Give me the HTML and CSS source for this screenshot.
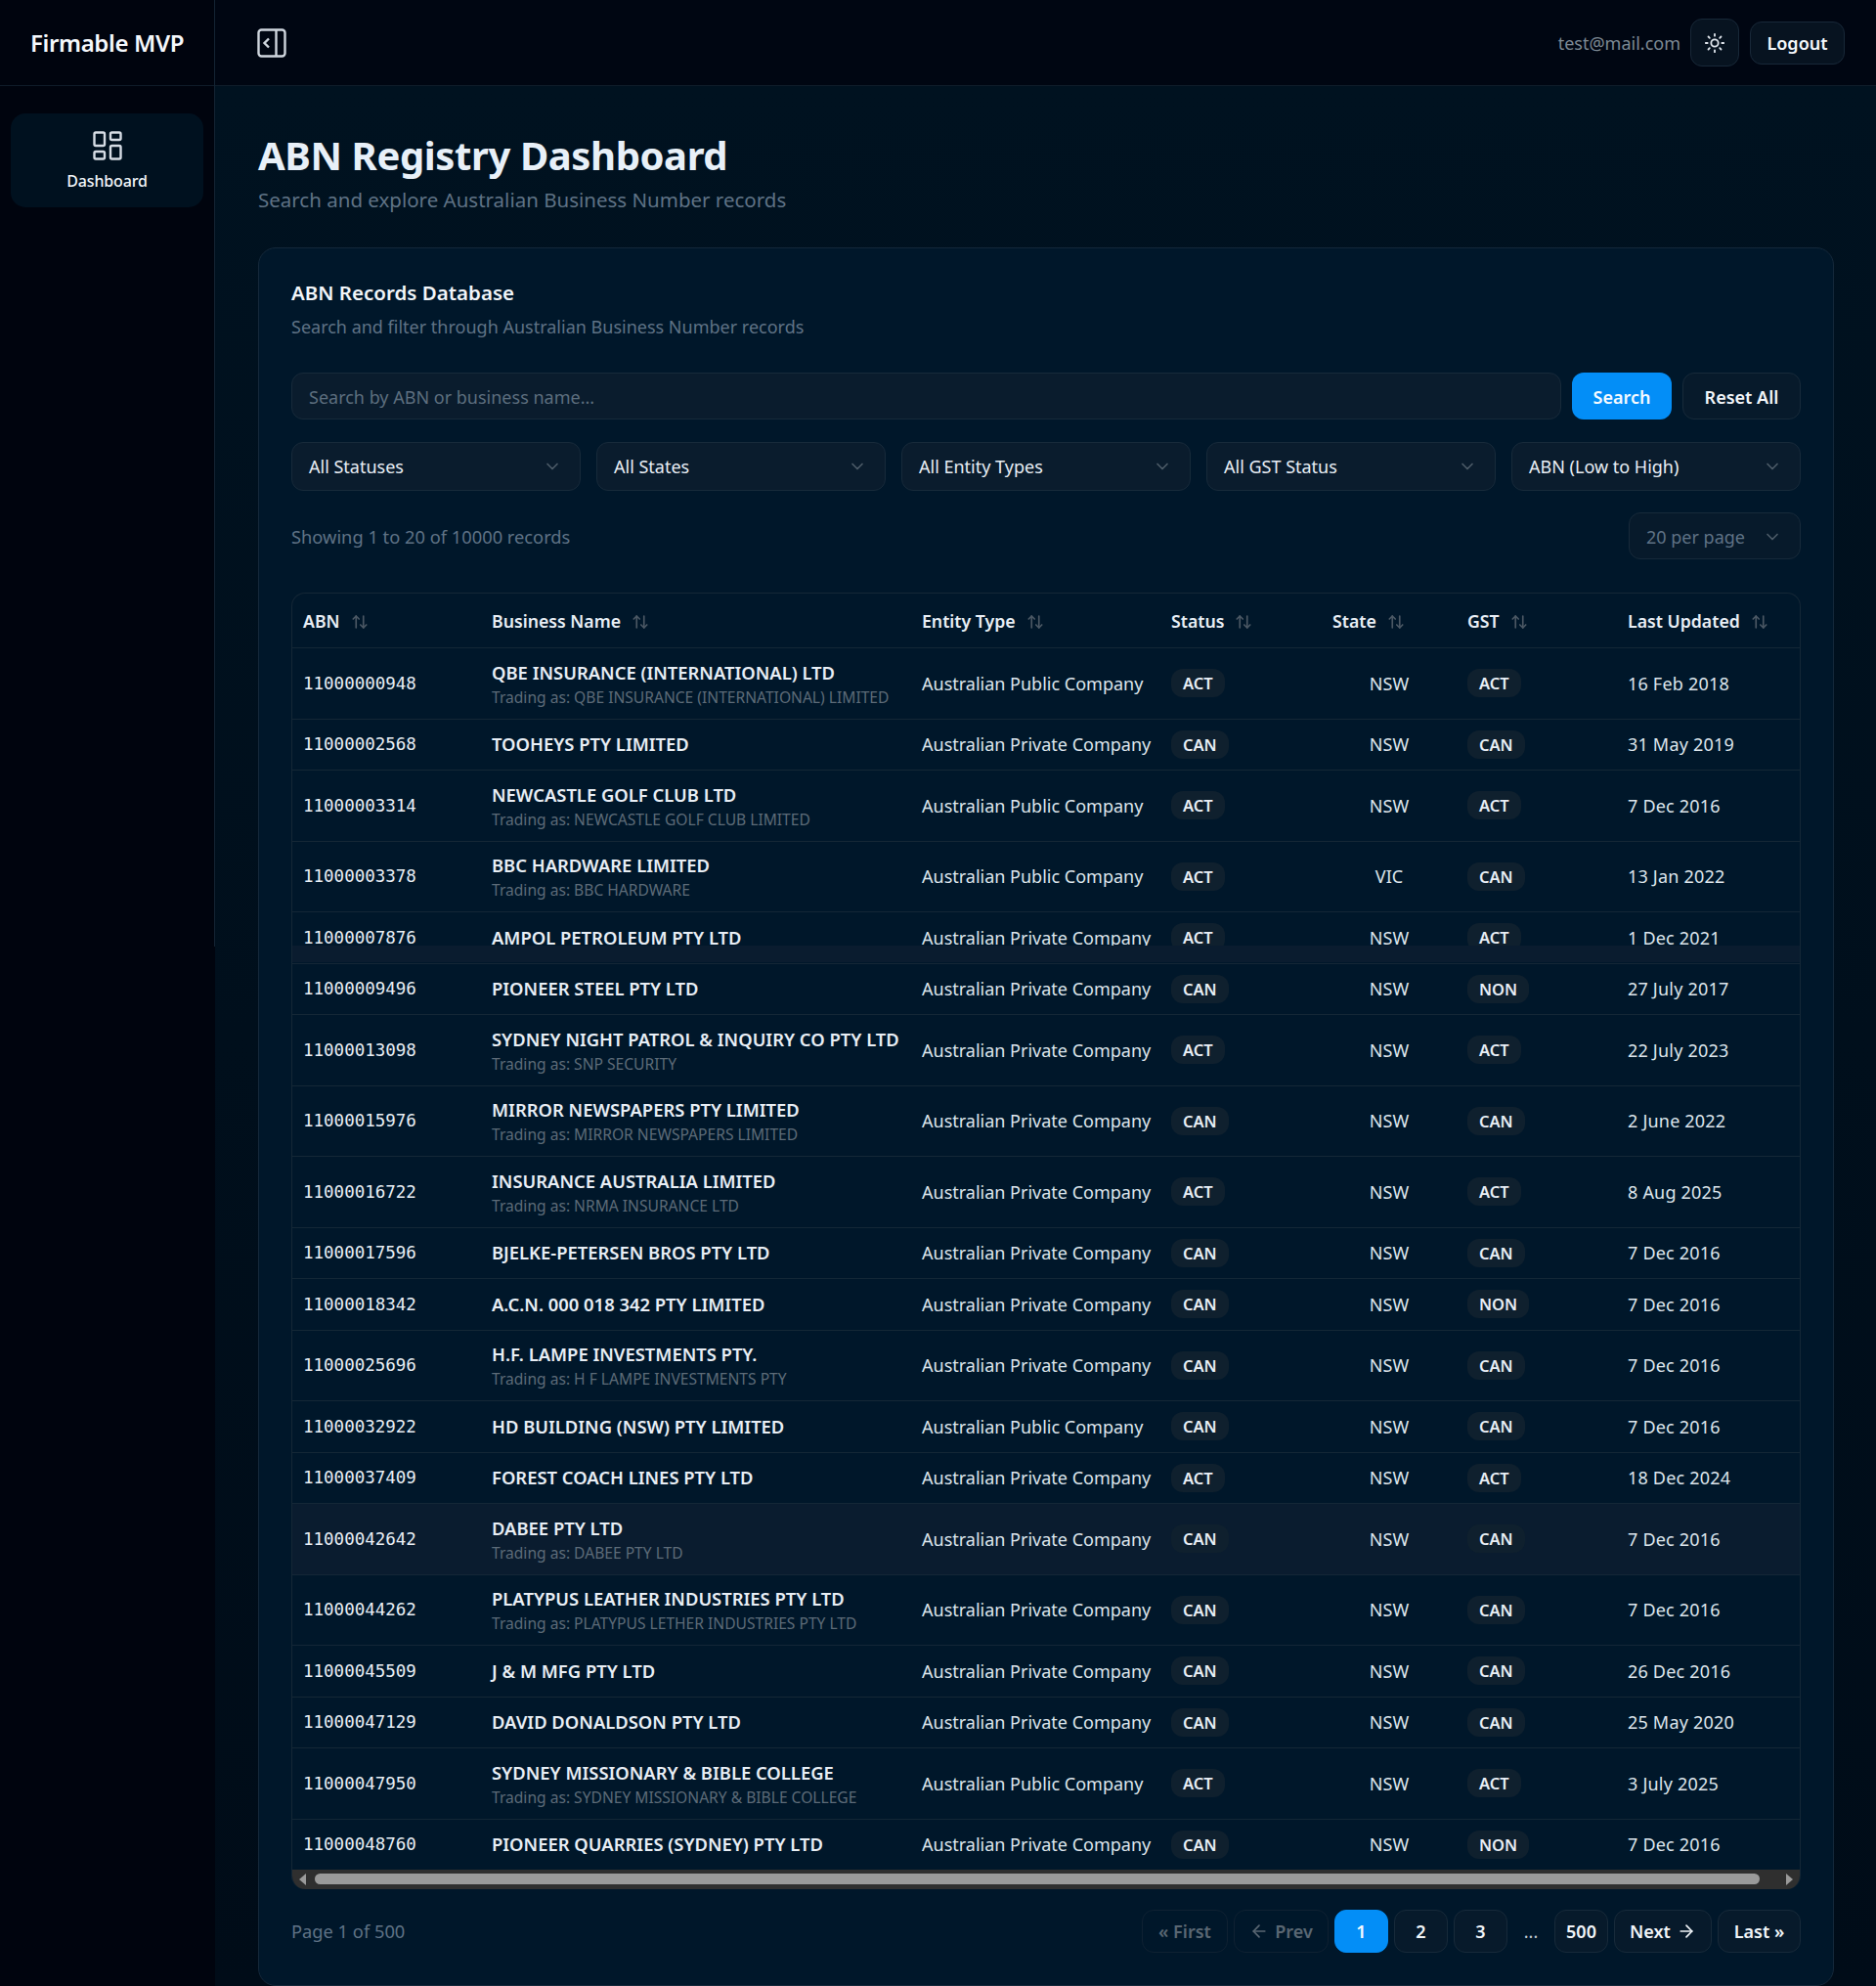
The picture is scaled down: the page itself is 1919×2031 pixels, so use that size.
FILE: index.html
```html
<!DOCTYPE html>
<html>
<head>
    <title>Firmable MVP</title>
    <link rel="stylesheet" href="styles.css">
</head>
<body>
    <svg class="icon-defs" width="0" height="0">
        <symbol id="i-sort" viewBox="0 0 24 24"><path d="m21 16-4 4-4-4"/><path d="M17 20V4"/><path d="m3 8 4-4 4 4"/><path d="M7 4v16"/></symbol>
        <symbol id="i-chev" viewBox="0 0 24 24"><path d="m6 9 6 6 6-6"/></symbol>
    </svg>

    <!-- sidebar -->
    <aside class="sidebar">
        <div class="sidebar-inner">
            <div class="brand">Firmable MVP</div>
            <nav class="side-nav">
                <a class="nav-item">
                    <svg class="nav-icon" viewBox="0 0 24 24"><rect width="7" height="9" x="3" y="3" rx="1"/><rect width="7" height="5" x="14" y="3" rx="1"/><rect width="7" height="9" x="14" y="12" rx="1"/><rect width="7" height="5" x="3" y="16" rx="1"/></svg>
                    <span>Dashboard</span>
                </a>
            </nav>
        </div>
    </aside>

    <div class="content">
        <!-- top bar -->
        <header class="topbar">
            <svg class="panel-icon" viewBox="0 0 24 24"><rect width="18" height="18" x="3" y="3" rx="2"/><path d="M15 3v18"/><path d="m10 15-3-3 3-3"/></svg>
            <div class="topbar-right">
                <span class="user-mail">test@mail.com</span>
                <button class="theme-btn">
                    <svg class="sun-icon" viewBox="0 0 24 24"><circle cx="12" cy="12" r="4"/><path d="M12 2v2"/><path d="M12 20v2"/><path d="m4.93 4.93 1.41 1.41"/><path d="m17.66 17.66 1.41 1.41"/><path d="M2 12h2"/><path d="M20 12h2"/><path d="m6.34 17.66-1.41 1.41"/><path d="m19.07 4.93-1.41 1.41"/></svg>
                </button>
                <button class="logout-btn">Logout</button>
            </div>
        </header>

        <main class="main">
            <h1>ABN Registry Dashboard</h1>
            <p class="page-sub">Search and explore Australian Business Number records</p>

            <section class="card">
                <h2>ABN Records Database</h2>
                <p class="card-sub">Search and filter through Australian Business Number records</p>

                <div class="search-row">
                    <input class="search-input" type="text" placeholder="Search by ABN or business name...">
                    <button class="btn-primary">Search</button>
                    <button class="btn-outline">Reset All</button>
                </div>

                <div class="filter-row">
                    <button class="select-box"><span>All Statuses</span><svg class="chev"><use href="#i-chev"/></svg></button>
                    <button class="select-box"><span>All States</span><svg class="chev"><use href="#i-chev"/></svg></button>
                    <button class="select-box"><span>All Entity Types</span><svg class="chev"><use href="#i-chev"/></svg></button>
                    <button class="select-box"><span>All GST Status</span><svg class="chev"><use href="#i-chev"/></svg></button>
                    <button class="select-box"><span>ABN (Low to High)</span><svg class="chev"><use href="#i-chev"/></svg></button>
                </div>

                <div class="count-row">
                    <span class="muted">Showing 1 to 20 of 10000 records</span>
                    <button class="select-box per-page"><span>20 per page</span><svg class="chev"><use href="#i-chev"/></svg></button>
                </div>

                <div class="table-wrap">
                    <table class="abn-table">
                        <colgroup>
                            <col class="c-abn"><col class="c-name"><col class="c-type"><col class="c-status"><col class="c-state"><col class="c-gst"><col class="c-date">
                        </colgroup>
                        <thead>
                            <tr>
                                <th>ABN<svg class="sort"><use href="#i-sort"/></svg></th>
                                <th>Business Name<svg class="sort"><use href="#i-sort"/></svg></th>
                                <th>Entity Type<svg class="sort"><use href="#i-sort"/></svg></th>
                                <th>Status<svg class="sort"><use href="#i-sort"/></svg></th>
                                <th>State<svg class="sort"><use href="#i-sort"/></svg></th>
                                <th>GST<svg class="sort"><use href="#i-sort"/></svg></th>
                                <th>Last Updated<svg class="sort"><use href="#i-sort"/></svg></th>
                            </tr>
                        </thead>
                        <tbody>
                            <tr class="two">
                                <td class="abn">11000000948</td>
                                <td><div class="biz">QBE INSURANCE (INTERNATIONAL) LTD</div><div class="trading">Trading as: QBE INSURANCE (INTERNATIONAL) LIMITED</div></td>
                                <td>Australian Public Company</td><td><span class="badge">ACT</span></td><td class="state">NSW</td><td><span class="badge">ACT</span></td><td>16 Feb 2018</td>
                            </tr>
                            <tr>
                                <td class="abn">11000002568</td>
                                <td><div class="biz">TOOHEYS PTY LIMITED</div></td>
                                <td>Australian Private Company</td><td><span class="badge">CAN</span></td><td class="state">NSW</td><td><span class="badge">CAN</span></td><td>31 May 2019</td>
                            </tr>
                            <tr class="two">
                                <td class="abn">11000003314</td>
                                <td><div class="biz">NEWCASTLE GOLF CLUB LTD</div><div class="trading">Trading as: NEWCASTLE GOLF CLUB LIMITED</div></td>
                                <td>Australian Public Company</td><td><span class="badge">ACT</span></td><td class="state">NSW</td><td><span class="badge">ACT</span></td><td>7 Dec 2016</td>
                            </tr>
                            <tr class="two">
                                <td class="abn">11000003378</td>
                                <td><div class="biz">BBC HARDWARE LIMITED</div><div class="trading">Trading as: BBC HARDWARE</div></td>
                                <td>Australian Public Company</td><td><span class="badge">ACT</span></td><td class="state">VIC</td><td><span class="badge">CAN</span></td><td>13 Jan 2022</td>
                            </tr>
                            <tr class="cut-row">
                                <td class="abn">11000007876</td>
                                <td><div class="biz">AMPOL PETROLEUM PTY LTD</div></td>
                                <td>Australian Private Company</td><td><span class="badge">ACT</span></td><td class="state">NSW</td><td><span class="badge">ACT</span></td><td>1 Dec 2021</td>
                            </tr>
                            <tr>
                                <td class="abn">11000009496</td>
                                <td><div class="biz">PIONEER STEEL PTY LTD</div></td>
                                <td>Australian Private Company</td><td><span class="badge">CAN</span></td><td class="state">NSW</td><td><span class="badge">NON</span></td><td>27 July 2017</td>
                            </tr>
                            <tr class="two">
                                <td class="abn">11000013098</td>
                                <td><div class="biz">SYDNEY NIGHT PATROL &amp; INQUIRY CO PTY LTD</div><div class="trading">Trading as: SNP SECURITY</div></td>
                                <td>Australian Private Company</td><td><span class="badge">ACT</span></td><td class="state">NSW</td><td><span class="badge">ACT</span></td><td>22 July 2023</td>
                            </tr>
                            <tr class="two">
                                <td class="abn">11000015976</td>
                                <td><div class="biz">MIRROR NEWSPAPERS PTY LIMITED</div><div class="trading">Trading as: MIRROR NEWSPAPERS LIMITED</div></td>
                                <td>Australian Private Company</td><td><span class="badge">CAN</span></td><td class="state">NSW</td><td><span class="badge">CAN</span></td><td>2 June 2022</td>
                            </tr>
                            <tr class="two">
                                <td class="abn">11000016722</td>
                                <td><div class="biz">INSURANCE AUSTRALIA LIMITED</div><div class="trading">Trading as: NRMA INSURANCE LTD</div></td>
                                <td>Australian Private Company</td><td><span class="badge">ACT</span></td><td class="state">NSW</td><td><span class="badge">ACT</span></td><td>8 Aug 2025</td>
                            </tr>
                            <tr>
                                <td class="abn">11000017596</td>
                                <td><div class="biz">BJELKE-PETERSEN BROS PTY LTD</div></td>
                                <td>Australian Private Company</td><td><span class="badge">CAN</span></td><td class="state">NSW</td><td><span class="badge">CAN</span></td><td>7 Dec 2016</td>
                            </tr>
                            <tr>
                                <td class="abn">11000018342</td>
                                <td><div class="biz">A.C.N. 000 018 342 PTY LIMITED</div></td>
                                <td>Australian Private Company</td><td><span class="badge">CAN</span></td><td class="state">NSW</td><td><span class="badge">NON</span></td><td>7 Dec 2016</td>
                            </tr>
                            <tr class="two">
                                <td class="abn">11000025696</td>
                                <td><div class="biz">H.F. LAMPE INVESTMENTS PTY.</div><div class="trading">Trading as: H F LAMPE INVESTMENTS PTY</div></td>
                                <td>Australian Private Company</td><td><span class="badge">CAN</span></td><td class="state">NSW</td><td><span class="badge">CAN</span></td><td>7 Dec 2016</td>
                            </tr>
                            <tr>
                                <td class="abn">11000032922</td>
                                <td><div class="biz">HD BUILDING (NSW) PTY LIMITED</div></td>
                                <td>Australian Public Company</td><td><span class="badge">CAN</span></td><td class="state">NSW</td><td><span class="badge">CAN</span></td><td>7 Dec 2016</td>
                            </tr>
                            <tr>
                                <td class="abn">11000037409</td>
                                <td><div class="biz">FOREST COACH LINES PTY LTD</div></td>
                                <td>Australian Private Company</td><td><span class="badge">ACT</span></td><td class="state">NSW</td><td><span class="badge">ACT</span></td><td>18 Dec 2024</td>
                            </tr>
                            <tr class="two hovered">
                                <td class="abn">11000042642</td>
                                <td><div class="biz">DABEE PTY LTD</div><div class="trading">Trading as: DABEE PTY LTD</div></td>
                                <td>Australian Private Company</td><td><span class="badge">CAN</span></td><td class="state">NSW</td><td><span class="badge">CAN</span></td><td>7 Dec 2016</td>
                            </tr>
                            <tr class="two">
                                <td class="abn">11000044262</td>
                                <td><div class="biz">PLATYPUS LEATHER INDUSTRIES PTY LTD</div><div class="trading">Trading as: PLATYPUS LETHER INDUSTRIES PTY LTD</div></td>
                                <td>Australian Private Company</td><td><span class="badge">CAN</span></td><td class="state">NSW</td><td><span class="badge">CAN</span></td><td>7 Dec 2016</td>
                            </tr>
                            <tr>
                                <td class="abn">11000045509</td>
                                <td><div class="biz">J &amp; M MFG PTY LTD</div></td>
                                <td>Australian Private Company</td><td><span class="badge">CAN</span></td><td class="state">NSW</td><td><span class="badge">CAN</span></td><td>26 Dec 2016</td>
                            </tr>
                            <tr>
                                <td class="abn">11000047129</td>
                                <td><div class="biz">DAVID DONALDSON PTY LTD</div></td>
                                <td>Australian Private Company</td><td><span class="badge">CAN</span></td><td class="state">NSW</td><td><span class="badge">CAN</span></td><td>25 May 2020</td>
                            </tr>
                            <tr class="two">
                                <td class="abn">11000047950</td>
                                <td><div class="biz">SYDNEY MISSIONARY &amp; BIBLE COLLEGE</div><div class="trading">Trading as: SYDNEY MISSIONARY &amp; BIBLE COLLEGE</div></td>
                                <td>Australian Public Company</td><td><span class="badge">ACT</span></td><td class="state">NSW</td><td><span class="badge">ACT</span></td><td>3 July 2025</td>
                            </tr>
                            <tr class="last">
                                <td class="abn">11000048760</td>
                                <td><div class="biz">PIONEER QUARRIES (SYDNEY) PTY LTD</div></td>
                                <td>Australian Private Company</td><td><span class="badge">CAN</span></td><td class="state">NSW</td><td><span class="badge">NON</span></td><td>7 Dec 2016</td>
                            </tr>
                        </tbody>
                    </table>
                    <div class="cut-band"></div>
                    <div class="scrollbar">
                        <span class="arrow-left"></span>
                        <span class="thumb"></span>
                        <span class="arrow-right"></span>
                    </div>
                </div>

                <div class="pager-row">
                    <span class="muted">Page 1 of 500</span>
                    <div class="pager">
                        <button class="page-btn disabled first">« First</button>
                        <button class="page-btn disabled prev"><svg class="page-arrow" viewBox="0 0 24 24"><path d="m12 19-7-7 7-7"/><path d="M19 12H5"/></svg>Prev</button>
                        <button class="page-btn num active">1</button>
                        <button class="page-btn num">2</button>
                        <button class="page-btn num">3</button>
                        <span class="dots">...</span>
                        <button class="page-btn num">500</button>
                        <button class="page-btn next">Next<svg class="page-arrow" viewBox="0 0 24 24"><path d="M5 12h14"/><path d="m12 5 7 7-7 7"/></svg></button>
                        <button class="page-btn last-btn">Last »</button>
                    </div>
                </div>
            </section>
        </main>
    </div>
</body>
</html>
```

FILE: styles.css
```css
* {
    box-sizing: border-box;
}

html, body {
    margin: 0;
    height: 2031px;
    overflow: hidden;
}

body {
    display: flex;
    background: #00040e;
    color: #e8eef5;
    font-family: "Noto Sans", "Open Sans", sans-serif;
    font-size: 18px;
}

button, input {
    font-family: inherit;
    font-size: inherit;
}

.icon-defs {
    position: absolute;
}

/* sidebar */
.sidebar {
    width: 220px;
    flex-shrink: 0;
    background: #00040e;
}

.sidebar-inner {
    height: 968px;
    border-right: 1px solid #142433;
}

.brand {
    height: 88px;
    border-bottom: 1px solid #0f1c29;
    display: flex;
    align-items: center;
    justify-content: center;
    font-size: 24px;
    font-weight: 600;
    letter-spacing: -0.015em;
    color: #f5f8fc;
}

.side-nav {
    padding: 28px 11px;
}

.nav-item {
    height: 96px;
    border-radius: 15px;
    background: #00111f;
    display: flex;
    flex-direction: column;
    align-items: center;
    padding-top: 15px;
    font-size: 16px;
    font-weight: 500;
    letter-spacing: -0.01em;
    color: #f1f5f9;
}

.nav-icon {
    width: 36px;
    height: 36px;
    fill: none;
    stroke: #d5dce4;
    stroke-width: 1.6;
    margin-bottom: 7px;
}

/* top bar */
.content {
    flex: 1;
    min-width: 0;
}

.topbar {
    height: 88px;
    background: #000612;
    border-bottom: 1px solid #0f1c29;
    display: flex;
    align-items: center;
    justify-content: space-between;
    padding: 0 32px 0 40px;
}

.panel-icon {
    width: 36px;
    height: 36px;
    fill: none;
    stroke: #cfd6de;
    stroke-width: 1.6;
}

.topbar-right {
    display: flex;
    align-items: center;
}

.user-mail {
    color: #7d8994;
    margin-right: 10px;
}

.theme-btn {
    width: 50px;
    height: 49px;
    border: 1px solid #182838;
    border-radius: 12px;
    background: #071320;
    display: flex;
    align-items: center;
    justify-content: center;
    padding: 0;
    margin-right: 11px;
}

.sun-icon {
    width: 22px;
    height: 22px;
    fill: none;
    stroke: #dfe5ec;
    stroke-width: 2;
    stroke-linecap: round;
}

.logout-btn {
    height: 44px;
    width: 97px;
    border: 1px solid #182838;
    border-radius: 12px;
    background: #071320;
    color: #f5f8fc;
    font-weight: 600;
    padding: 0;
}

/* main */
.main {
    height: 1943px;
    background: linear-gradient(#001220, #000c18);
    padding: 43px 43px 0 44px;
}

h1 {
    margin: 0;
    font-size: 40px;
    line-height: 55px;
    font-weight: 700;
    letter-spacing: -0.01em;
    color: #e8f0f8;
}

.page-sub {
    margin: 4px 0 0;
    font-size: 20.5px;
    line-height: 28px;
    color: #5f7285;
}

.card {
    margin-top: 35px;
    height: 1778px;
    background: #00172a;
    border: 1px solid #14283a;
    border-radius: 18px;
    padding: 30px 33px 0;
}

h2 {
    margin: 0;
    font-size: 20.5px;
    line-height: 30px;
    font-weight: 600;
    color: #f1f5f9;
}

.card-sub {
    margin: 5px 0 0;
    line-height: 30px;
    color: #5f7285;
}

.search-row {
    display: flex;
    gap: 11px;
    margin-top: 32px;
}

.search-input {
    flex: 1;
    height: 48px;
    padding: 1px 17px 0;
    background: #0a1c2d;
    border: 1px solid #172a3a;
    border-radius: 12px;
    color: #e8eef5;
    outline: none;
}

.search-input::placeholder {
    color: #5d6e7e;
    opacity: 1;
}

.btn-primary {
    width: 102px;
    height: 48px;
    padding: 1px 0 0;
    border: none;
    border-radius: 12px;
    background: #038ef7;
    color: #f5faff;
    font-weight: 600;
}

.btn-outline {
    width: 121px;
    height: 48px;
    padding: 1px 0 0;
    border: 1px solid #172a3a;
    border-radius: 12px;
    background: #071a2b;
    color: #f1f5f9;
    font-weight: 600;
}

.filter-row {
    display: grid;
    grid-template-columns: repeat(5, 1fr);
    gap: 16px;
    margin-top: 23px;
}

.select-box {
    height: 50px;
    padding: 0 18px 0 17px;
    display: flex;
    align-items: center;
    justify-content: space-between;
    background: #0a1c2d;
    border: 1px solid #172a3a;
    border-radius: 12px;
    color: #e8eef5;
    text-align: left;
}

.chev {
    width: 20px;
    height: 20px;
    fill: none;
    stroke: #4d5b68;
    stroke-width: 2;
    stroke-linecap: round;
    stroke-linejoin: round;
}

.count-row {
    display: flex;
    align-items: center;
    justify-content: space-between;
    margin-top: 22px;
}

.muted {
    font-size: 18.3px;
    color: #5f7285;
}

.per-page {
    width: 176px;
    height: 48px;
    padding-top: 1px;
    color: #5f7285;
    background: #071a2b;
}

/* table */
.table-wrap {
    position: relative;
    margin-top: 34px;
    border: 1px solid #142736;
    border-bottom: none;
    border-radius: 14px;
    overflow: hidden;
}

.abn-table {
    width: 100%;
    table-layout: fixed;
    border-collapse: separate;
    border-spacing: 0;
}

.c-abn { width: 193px; }
.c-name { width: 440px; }
.c-type { width: 255px; }
.c-status { width: 165px; }
.c-state { width: 138px; }
.c-gst { width: 164px; }
.c-date { width: 187px; }

th {
    height: 56px;
    padding: 0 11px;
    text-align: left;
    font-size: 17.7px;
    font-weight: 600;
    color: #e8eef5;
    border-bottom: 1px solid #142736;
}

.sort {
    width: 18px;
    height: 18px;
    margin-left: 11px;
    vertical-align: -3px;
    fill: none;
    stroke: #4b5864;
    stroke-width: 2.2;
    stroke-linecap: round;
    stroke-linejoin: round;
}

td {
    height: 52.5px;
    padding: 0 11px;
    color: #dde5ec;
    border-bottom: 1px solid #142736;
    white-space: nowrap;
}

td:last-child {
    letter-spacing: 0.2px;
}

.two td {
    height: 72.5px;
}

.last td {
    border-bottom: none;
    height: 51px;
}

.hovered td {
    background: #0a1c2f;
}

.abn {
    font-family: "DejaVu Sans Mono", monospace;
    font-size: 17.5px;
    color: #e8eef5;
}

.biz {
    font-size: 18.4px;
    font-weight: 600;
    color: #e8eef5;
    line-height: 24px;
}

.trading {
    margin-top: 3px;
    margin-bottom: -1px;
    font-size: 15.6px;
    line-height: 20px;
    color: #5d6b78;
}

.state {
    text-align: center;
}

.badge {
    display: inline-block;
    height: 29px;
    line-height: 29px;
    padding: 0 12px;
    border-radius: 12px;
    background: #0f202e;
    font-size: 16.5px;
    font-weight: 600;
    color: #e8eef5;
}

/* page stitching band across the cut row */
.cut-band {
    position: absolute;
    left: 0;
    right: 0;
    top: 360px;
    height: 17px;
    background: #0a1c2f;
}

.scrollbar {
    height: 20px;
    background: #2f2f2f;
    display: flex;
    align-items: center;
    padding: 0 7px;
}

.arrow-left, .arrow-right {
    width: 0;
    height: 0;
    border-top: 6px solid transparent;
    border-bottom: 6px solid transparent;
}

.arrow-left {
    border-right: 7px solid #9a9a9a;
}

.arrow-right {
    border-left: 7px solid #9a9a9a;
}

.thumb {
    flex: 1;
    height: 11px;
    margin: 0 27px 0 9px;
    border-radius: 6px;
    background: #9a9a9a;
}

/* pagination */
.pager-row {
    display: flex;
    align-items: center;
    justify-content: space-between;
    margin-top: 21px;
}

.pager {
    display: flex;
    align-items: center;
    gap: 6px;
}

.page-btn {
    height: 44px;
    padding: 0;
    border: 1px solid #172a3a;
    border-radius: 12px;
    background: #071a2b;
    color: #f1f5f9;
    font-weight: 600;
    display: flex;
    align-items: center;
    justify-content: center;
    gap: 6px;
}

.page-btn.first { width: 88px; }
.page-btn.prev { width: 97px; }
.page-btn.next { width: 100px; }
.page-btn.last-btn { width: 85px; }

.page-btn.num {
    width: 55px;
}

.page-btn.active {
    background: #038ef7;
    border-color: #038ef7;
    color: #f5faff;
}

.page-btn.disabled {
    background: transparent;
    color: #5a6773;
    border-color: #0f2132;
}

.page-arrow {
    width: 20px;
    height: 20px;
    fill: none;
    stroke: currentColor;
    stroke-width: 2;
    stroke-linecap: round;
    stroke-linejoin: round;
}

.dots {
    width: 36px;
    text-align: center;
    color: #c5ced6;
}
```
